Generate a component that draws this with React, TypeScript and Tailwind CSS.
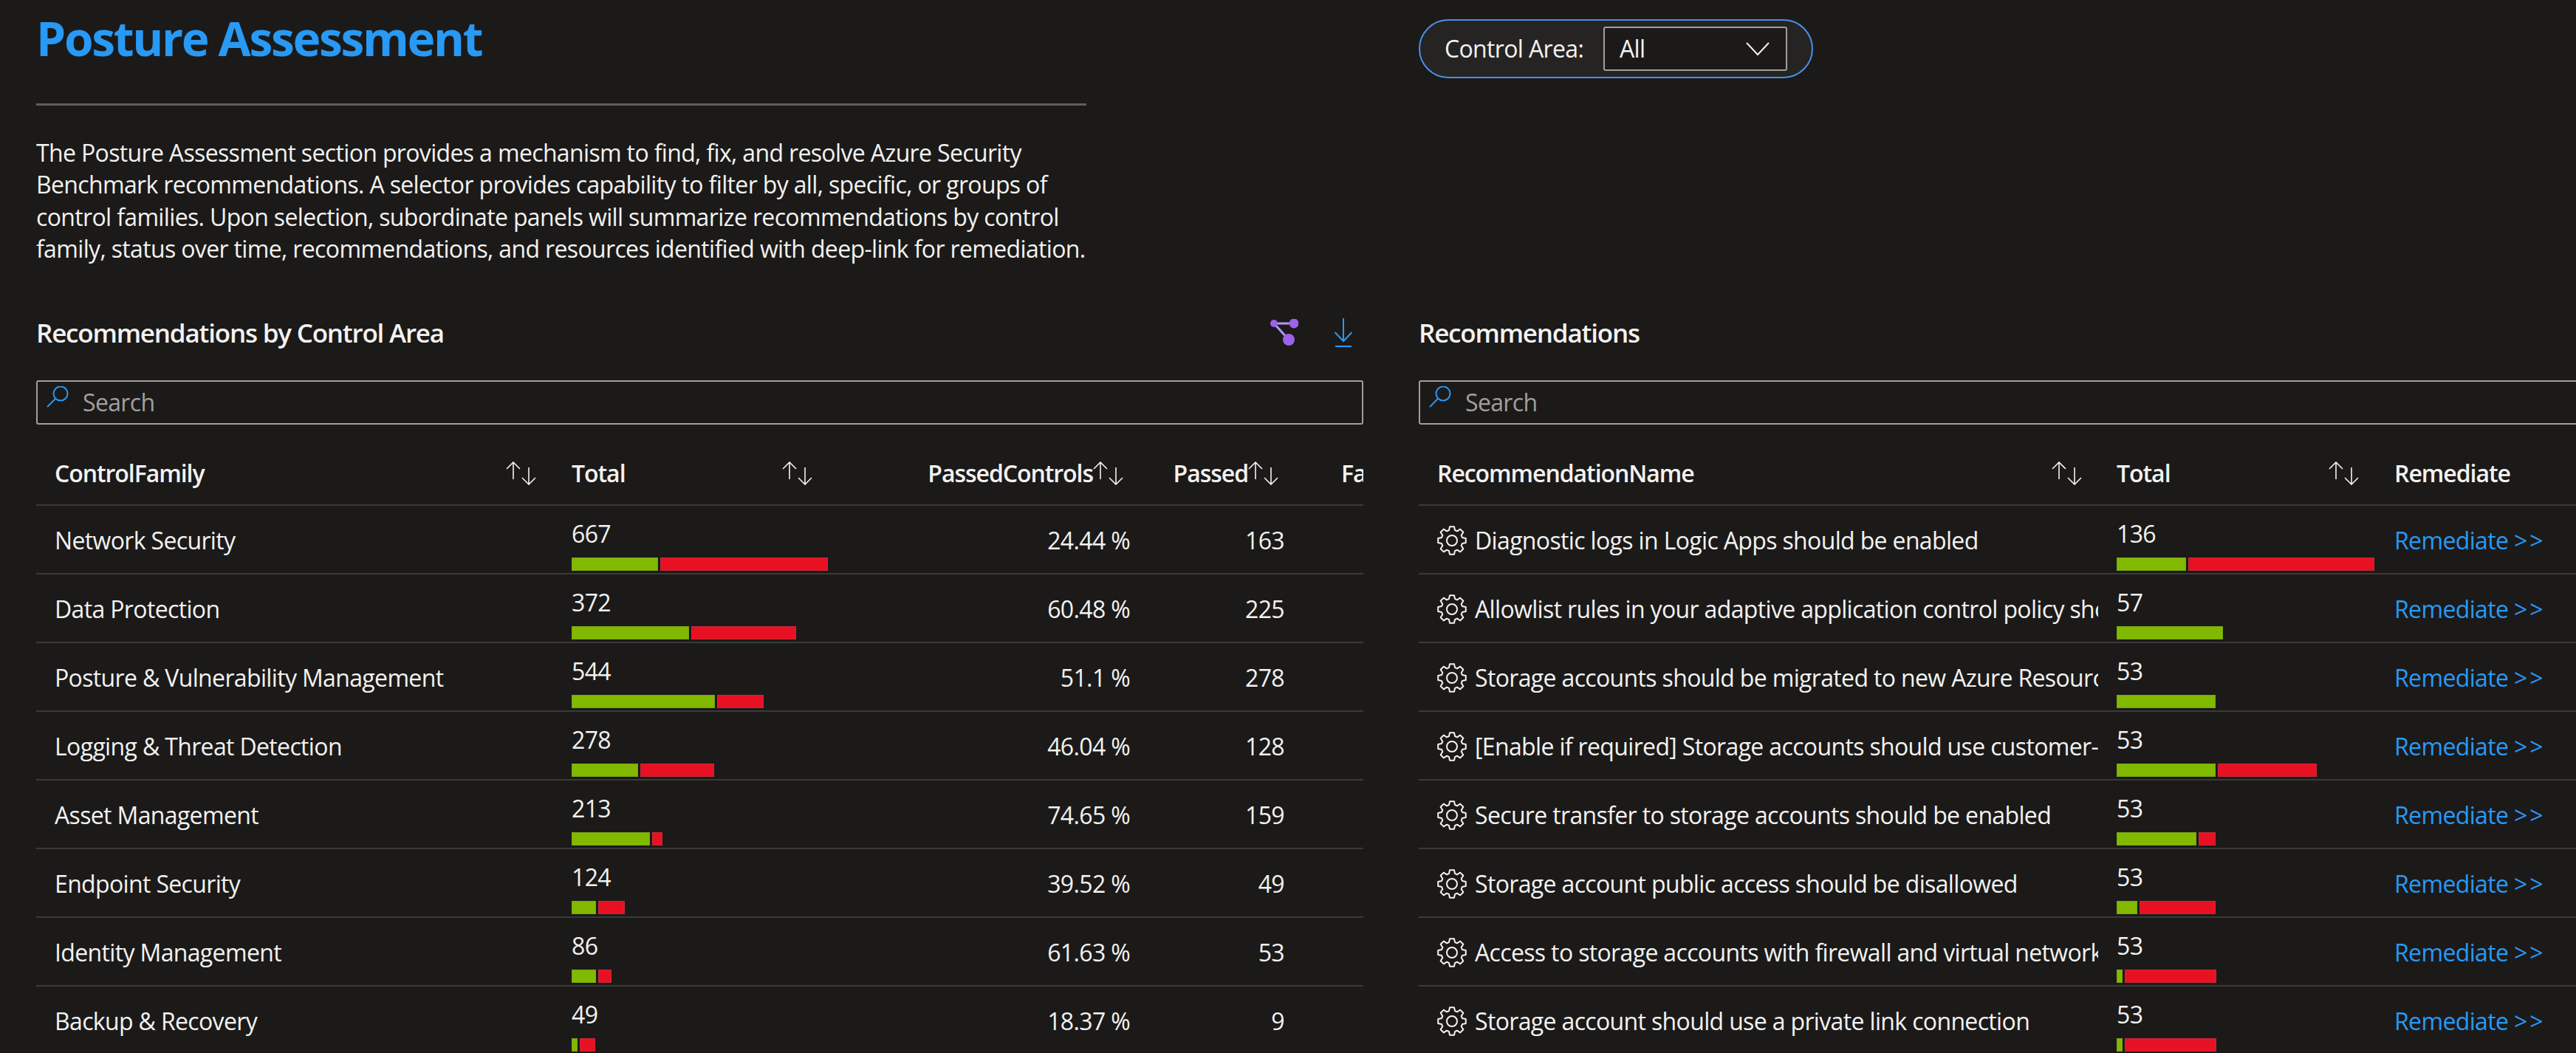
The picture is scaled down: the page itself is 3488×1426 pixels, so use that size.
import React from "react";

const sans = "font-['Open_Sans','Noto_Sans',sans-serif]";

function SortIcon() {
  return (
    <svg width="41" height="32" viewBox="0 0 41 32" fill="none" stroke="#f3f2f1" strokeWidth="1.6" className="shrink-0">
      <path d="M10 1V24M1 10L10 1L19 10" />
      <path d="M31 8V31M22 22L31 31L40 22" />
    </svg>
  );
}

const gearPath = (() => {
  const pts: string[] = [];
  const n = 8;
  const outer = 19;
  const inner = 14.5;
  for (let i = 0; i < n; i++) {
    const a = (i * 2 * Math.PI) / n - Math.PI / 2;
    const step = (2 * Math.PI) / n;
    const add = (r: number, t: number) => {
      pts.push(`${(20 + r * Math.cos(a + t)).toFixed(2)} ${(20 + r * Math.sin(a + t)).toFixed(2)}`);
    };
    add(inner, -step * 0.36);
    add(outer, -step * 0.2);
    add(outer, step * 0.2);
    add(inner, step * 0.36);
  }
  return `M${pts.join("L")}Z`;
})();

function Gear() {
  return (
    <svg width="40" height="40" viewBox="0 0 40 40" fill="none" stroke="#f3f2f1" strokeWidth="2" strokeLinejoin="round" className="shrink-0">
      <path d={gearPath} />
      <circle cx="20" cy="20" r="7" />
    </svg>
  );
}

function SearchBox() {
  return (
    <div className="h-[60px] border-2 border-[#a19f9d] rounded-[3px] flex items-start pl-[12px] w-full">
      <svg width="32" height="34" viewBox="0 0 32 34" fill="none" stroke="#2899f5" strokeWidth="2" className="mt-[6px] shrink-0">
        <circle cx="19" cy="10" r="9.5" />
        <path d="M12 17L1 28" />
      </svg>
      <span className="text-[#a19f9d] text-[32px] leading-[56px] ml-[17px] tracking-[-0.65px]">Search</span>
    </div>
  );
}

function Bar({ g, r, gap }: { g: number; r: number; gap: number }) {
  return (
    <div className="flex h-[18px] mt-[3px]">
      <div className="bg-[#81b900] border border-[#7aa80e]" style={{ width: g }} />
      {r > 0 && <div className="bg-[#e81123] border border-[#c9293a]" style={{ width: r, marginLeft: gap }} />}
    </div>
  );
}

function TotalCell({ v, g, r, gap = 3 }: { v: string; g: number; r: number; gap?: number }) {
  return (
    <div className="flex flex-col justify-end h-full pb-[3px]">
      <div className="text-[32px] leading-[44px] tracking-[-0.65px]">{v}</div>
      <div className="h-[7px]" />
      <Bar g={g} r={r} gap={gap} />
    </div>
  );
}

const leftRows = [
  ["Network Security", "667", 117, 227, "24.44 %", "163"],
  ["Data Protection", "372", 159, 142, "60.48 %", "225"],
  ["Posture & Vulnerability Management", "544", 194, 63, "51.1 %", "278"],
  ["Logging & Threat Detection", "278", 90, 100, "46.04 %", "128"],
  ["Asset Management", "213", 106, 14, "74.65 %", "159"],
  ["Endpoint Security", "124", 33, 36, "39.52 %", "49"],
  ["Identity Management", "86", 33, 18, "61.63 %", "53"],
  ["Backup & Recovery", "49", 8, 21, "18.37 %", "9"],
] as const;

const rightRows = [
  ["Diagnostic logs in Logic Apps should be enabled", "136", 94, 252],
  ["Allowlist rules in your adaptive application control policy should be defined", "57", 144, 0],
  ["Storage accounts should be migrated to new Azure Resource Manager resources", "53", 134, 0],
  ["[Enable if required] Storage accounts should use customer-managed key", "53", 134, 134],
  ["Secure transfer to storage accounts should be enabled", "53", 108, 23],
  ["Storage account public access should be disallowed", "53", 28, 103],
  ["Access to storage accounts with firewall and virtual network configurations", "53", 8, 124],
  ["Storage account should use a private link connection", "53", 8, 124],
] as const;

export default function App() {
  return (
    <div className={`${sans} bg-[#1b1a19] text-[#f3f2f1] w-[3488px] h-[1426px] overflow-hidden flex pl-[49px]`}>
      <div className="w-[1797px] shrink-0 flex flex-col">
        <h1 className="text-[#2899f5] text-[64px] leading-[80px] font-bold tracking-[-2.3px] mt-[12px] shrink-0">Posture Assessment</h1>
        <div className="w-[1422px] h-[3px] bg-[#605e5c] mt-[48px] shrink-0" />
        <p className="w-[1440px] text-[32px] leading-[43.3px] mt-[42px] tracking-[-0.65px] whitespace-nowrap shrink-0">
          The Posture Assessment section provides a mechanism to find, fix, and resolve Azure Security<br />
          Benchmark recommendations. A selector provides capability to filter by all, specific, or groups of<br />
          control families. Upon selection, subordinate panels will summarize recommendations by control<br />
          family, status over time, recommendations, and resources identified with deep-link for remediation.
        </p>
        <div className="flex items-center justify-between h-[50px] mt-[68px] shrink-0">
          <h2 className="text-[35px] font-semibold tracking-[-1.2px]">Recommendations by Control Area</h2>
          <div className="flex items-center gap-[49px] pr-[15px]">
            <svg width="38" height="38" viewBox="0 0 38 38">
              <path d="M5 6H32M5 6L25 28" stroke="#b796f5" strokeWidth="3" />
              <circle cx="5" cy="6" r="5" fill="#9a63ea" />
              <circle cx="32" cy="6" r="6.5" fill="#9a63ea" />
              <circle cx="25" cy="28" r="8" fill="#9a63ea" />
            </svg>
            <svg width="24" height="40" viewBox="0 0 24 40" fill="none" stroke="#2899f5" strokeWidth="2">
              <path d="M12 0V31M0.5 19L12 31L23.5 19M1 38H23" />
            </svg>
          </div>
        </div>
        <div className="mt-[39px] shrink-0"><SearchBox /></div>
        <div className="flex items-center h-[110px] pt-[24px] border-b-2 border-[#3b3a39] text-[32px] font-semibold tracking-[-1.05px] overflow-hidden shrink-0">
          <div className="w-[700px] pl-[25px] flex justify-between pr-[23px] items-center shrink-0"><span>ControlFamily</span><SortIcon /></div>
          <div className="w-[376px] pl-[25px] flex justify-between pr-[25px] items-center shrink-0"><span>Total</span><SortIcon /></div>
          <div className="w-[396px] flex justify-end items-center shrink-0"><span>PassedControls</span><SortIcon /></div>
          <div className="w-[210px] flex justify-end items-center shrink-0"><span>Passed</span><SortIcon /></div>
          <div className="pl-[85px] shrink-0">Failed</div>
        </div>
        {leftRows.map((r) => (
          <div key={r[0]} className="flex h-[93px] border-b-2 border-[#3b3a39] shrink-0 text-[32px] tracking-[-0.65px] items-center overflow-hidden">
            <div className="w-[700px] pl-[25px] shrink-0 whitespace-nowrap pt-[2px]">{r[0]}</div>
            <div className="w-[376px] pl-[25px] shrink-0 h-full"><TotalCell v={r[1]} g={r[2]} r={r[3]} /></div>
            <div className="w-[405px] text-right shrink-0 pt-[2px]">{r[4]}</div>
            <div className="w-[209px] text-right shrink-0 pt-[2px]">{r[5]}</div>
          </div>
        ))}
      </div>
      <div className="ml-[75px] flex-1 min-w-0 flex flex-col">
        <div className="flex items-center h-[80px] w-[534px] border-2 border-[#4a90e8] rounded-[40px] bg-[#252423] mt-[26px] pl-[33px] shrink-0">
          <span className="text-[32px] tracking-[-0.65px] w-[215px] shrink-0">Control Area:</span>
          <div className="w-[249px] h-[60px] border-2 border-[#a19f9d] rounded-[3px] bg-[#1b1a19] flex items-center justify-between pl-[20px] pr-[22px]">
            <span className="text-[32px] tracking-[-0.65px]">All</span>
            <svg width="32" height="20" viewBox="0 0 32 20" fill="none" stroke="#f3f2f1" strokeWidth="2">
              <path d="M1 2L16 18L31 2" />
            </svg>
          </div>
        </div>
        <h2 className="text-[35px] font-semibold tracking-[-1.2px] h-[50px] leading-[50px] mt-[320px] shrink-0">Recommendations</h2>
        <div className="mt-[39px] w-[1700px] shrink-0"><SearchBox /></div>
        <div className="flex items-center h-[110px] pt-[24px] border-b-2 border-[#3b3a39] text-[32px] font-semibold tracking-[-1.05px] shrink-0">
          <div className="w-[920px] pl-[25px] flex justify-between pr-[22px] items-center shrink-0"><span>RecommendationName</span><SortIcon /></div>
          <div className="w-[401px] pl-[25px] flex justify-between pr-[48px] items-center shrink-0"><span>Total</span><SortIcon /></div>
          <div className="shrink-0">Remediate</div>
        </div>
        {rightRows.map((r) => (
          <div key={r[0] as string} className="flex h-[93px] border-b-2 border-[#3b3a39] shrink-0 text-[32px] tracking-[-0.65px] items-center">
            <div className="w-[920px] pl-[25px] shrink-0 flex items-center gap-[11px] overflow-hidden whitespace-nowrap pt-[2px]"><Gear /><span>{r[0]}</span></div>
            <div className="w-[401px] pl-[25px] shrink-0 h-full"><TotalCell v={r[1] as string} g={r[2] as number} r={r[3] as number} /></div>
            <a className="text-[#2899f5] shrink-0 whitespace-nowrap pt-[2px]">Remediate <span className="tracking-[3px]">&gt;&gt;</span></a>
          </div>
        ))}
      </div>
    </div>
  );
}
